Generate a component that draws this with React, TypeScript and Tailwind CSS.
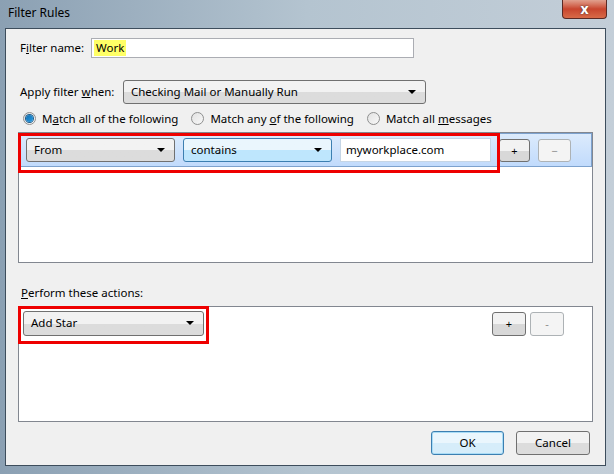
import { ReactNode } from 'react';

const Arrow = () => (
  <svg width="8" height="4" viewBox="0 0 8 4" className="shrink-0">
    <path d="M0 0h8L4 4z" fill="#000" />
  </svg>
);

const Select = ({ label, className = '', hot = false }: { label: string; className?: string; hot?: boolean }) => (
  <div
    className={`flex items-center justify-between rounded-[3px] border pl-[7px] pr-[9px] ${
      hot
        ? 'border-[#3c7fb1] bg-gradient-to-b from-[#eaf6fd] from-50% to-[#bee6fd] to-50%'
        : 'border-[#707070] bg-gradient-to-b from-[#f2f2f2] from-50% to-[#dcdcdc] to-50%'
    } ${className}`}
  >
    <span>{label}</span>
    <Arrow />
  </div>
);

const SmallButton = ({ children, disabled = false, className = '' }: { children: ReactNode; disabled?: boolean; className?: string }) => (
  <div
    className={`flex items-center justify-center rounded-[3px] border text-[11px] ${
      disabled
        ? 'border-[#adb2b5] bg-[#f4f4f4] text-[#8d8d8d]'
        : 'border-[#707070] bg-gradient-to-b from-[#f2f2f2] from-50% to-[#d8d8d8] to-50% text-black'
    } ${className}`}
  >
    {children}
  </div>
);

const Radio = ({ checked, children }: { checked?: boolean; children: ReactNode }) => (
  <label className="flex items-center gap-[6px]">
    <span className="flex h-[13px] w-[13px] items-center justify-center rounded-full border border-[#8e8f8f] bg-gradient-to-br from-[#e2e2e2] to-[#f8f8f8]">
      {checked && <span className="h-[7px] w-[7px] rounded-full bg-gradient-to-br from-[#0d6fb4] to-[#2a9be0] ring-1 ring-[#1a5a8a]" />}
    </span>
    <span>{children}</span>
  </label>
);

const App = () => {
  return (
    <div className="flex h-[474px] w-[614px] flex-col bg-gradient-to-r from-[#8ba0b3] via-[#b4c4d0] to-[#c3ced8] font-['Segoe_UI','Noto_Sans',sans-serif] text-[11.5px] leading-none text-black">
      {/* title bar */}
      <div className="flex h-[28px] items-start justify-between pl-[8px] pr-[7px]">
        <span className="mt-[7px] text-[12px] text-black">Filter Rules</span>
        <div className="flex h-[19px] w-[45px] items-center justify-center rounded-b-[4px] border border-t-0 border-[#5a2a25] bg-gradient-to-b from-[#e0a08e] via-[#c8452e] to-[#d86a48]">
          <span className="text-[14px] font-bold leading-none text-white [text-shadow:0_0_2px_#333]">x</span>
        </div>
      </div>

      {/* client area */}
      <div className="mb-[8px] ml-[5px] mr-[8px] flex flex-1 flex-col border border-[#3d4d5c] bg-[#f0f0f0]">
        <div className="mt-[9px] flex items-center pl-[14px]">
          <span className="w-[71px]">
            F<span className="underline">i</span>lter name:
          </span>
          <div className="flex h-[20px] w-[323px] items-center border border-[#abadb3] bg-white px-[2px]">
            <span className="bg-[#ffff66] px-[2px] py-[2px]">Work</span>
          </div>
        </div>

        <div className="mt-[22px] flex items-center pl-[14px]">
          <span className="w-[103px]">
            Apply filter <span className="underline">w</span>hen:
          </span>
          <Select label="Checking Mail or Manually Run" className="h-[24px] w-[303px]" />
        </div>

        <div className="mt-[8px] flex items-center gap-[13px] pl-[17px]">
          <Radio checked>
            M<span className="underline">a</span>tch all of the following
          </Radio>
          <Radio>
            Match any <span className="underline">o</span>f the following
          </Radio>
          <Radio>
            Match all <span className="underline">m</span>essages
          </Radio>
        </div>

        {/* conditions list */}
        <div className="relative ml-[12px] mt-[7px] h-[131px] w-[575px] border border-[#828790] bg-white">
          <div className="flex h-[34px] items-center gap-[8px] border border-[#7da2ce] bg-gradient-to-b from-[#dcebfc] to-[#c1dbfc] pl-[6px]">
            <Select label="From" className="h-[24px] w-[149px]" />
            <Select label="contains" hot className="h-[24px] w-[149px]" />
            <div className="flex h-[24px] w-[151px] items-center border border-[#c5d5e5] bg-white pl-[5px]">myworkplace.com</div>
            <SmallButton className="h-[23px] w-[31px]">+</SmallButton>
            <SmallButton disabled className="h-[23px] w-[33px]">−</SmallButton>
          </div>
          <div className="pointer-events-none absolute left-[-1px] top-0 h-[40px] w-[482px] border-[3px] border-[#ee0000]" />
        </div>

        <div className="ml-[15px] mt-[24px]">
          <span className="underline">P</span>erform these actions:
        </div>

        {/* actions list */}
        <div className="relative ml-[12px] mt-[7px] flex h-[116px] w-[575px] items-start justify-between border border-[#828790] bg-white pr-[28px] pt-[4px]">
          <Select label="Add Star" className="ml-[4px] h-[25px] w-[181px]" />
          <div className="mt-[1px] flex gap-[4px]">
            <SmallButton className="h-[24px] w-[34px]">+</SmallButton>
            <SmallButton disabled className="h-[24px] w-[34px]">-</SmallButton>
          </div>
          <div className="pointer-events-none absolute left-[-1px] top-[-1px] h-[38px] w-[191px] border-[3px] border-[#ee0000]" />
        </div>

        <div className="mr-[15px] mt-[9px] flex justify-end gap-[12px]">
          <div className="flex h-[24px] w-[73px] items-center justify-center rounded-[3px] border border-[#3c7fb1] bg-gradient-to-b from-[#eaf6fd] from-50% to-[#d6edfa] to-50% shadow-[inset_0_0_0_1px_#a9dcf6]">
            OK
          </div>
          <div className="flex h-[24px] w-[74px] items-center justify-center rounded-[3px] border border-[#707070] bg-gradient-to-b from-[#f2f2f2] from-50% to-[#dcdcdc] to-50%">
            Cancel
          </div>
        </div>
      </div>
    </div>
  );
};

export default App;
